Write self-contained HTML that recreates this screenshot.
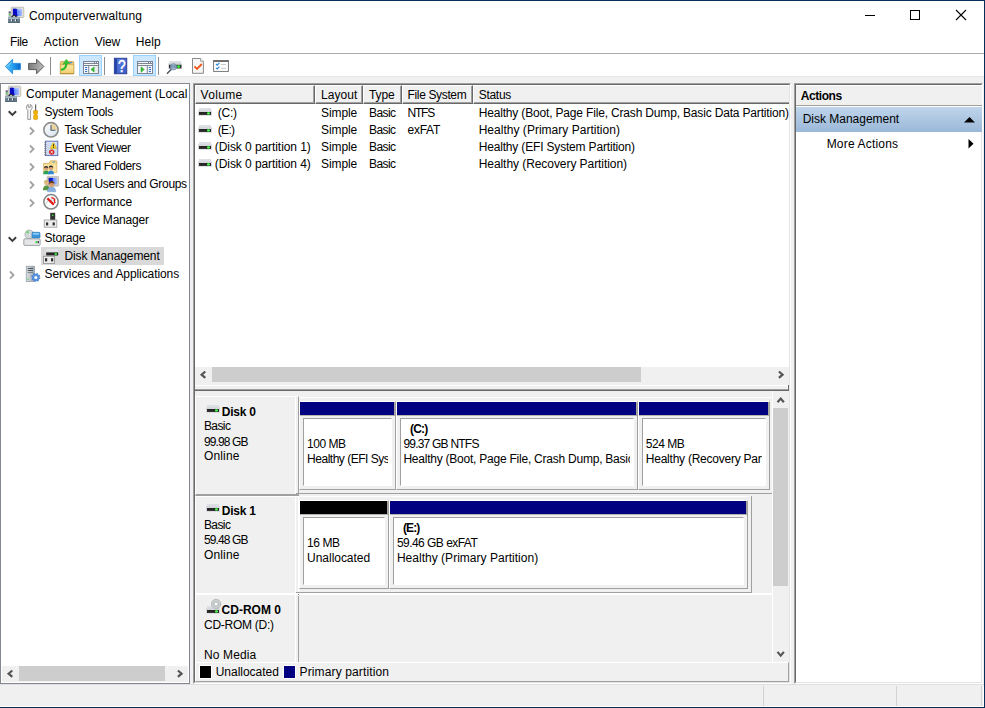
<!DOCTYPE html>
<html>
<head>
<meta charset="utf-8">
<title>Computerverwaltung</title>
<style>
html,body{margin:0;padding:0;}
body{width:985px;height:708px;overflow:hidden;background:#f0f0f0;position:relative;
 font-family:"Liberation Sans",sans-serif;font-size:12px;line-height:16px;color:#000;}
.b{position:absolute;box-sizing:border-box;}
.t{position:absolute;white-space:pre;line-height:16px;height:16px;}
svg{position:absolute;overflow:visible;}
.sunk{border-style:solid;border-width:1px;border-color:#a0a0a0 #fff #fff #a0a0a0;}
.sunk>.in{position:absolute;left:0;top:0;right:0;bottom:0;border-style:solid;border-width:1px;border-color:#696969 #e3e3e3 #e3e3e3 #696969;}
.hd{background:#f0f0f0;border-style:solid;border-width:1px 1px 1px 1px;border-color:#fff #696969 #696969 #fff;height:19px;top:85px;}
.hd:after{content:"";position:absolute;left:0;right:0;bottom:0;top:0;border-style:solid;border-width:0 1px 1px 0;border-color:#a0a0a0;}
.thumb{background:#cdcdcd;}
.lbl{background:#f0f0f0;border-style:solid;border-width:1px;border-color:#fff #a0a0a0 #a0a0a0 #fff;}
.part{background:#f0f0f0;border-style:solid;border-width:1px;border-color:#fff #a0a0a0 #a0a0a0 #fff;}
.part>.bar{position:absolute;left:0;right:1px;top:0;height:13px;box-shadow:1px 0 0 #a6a69c,0 1px 0 #b4b4aa,1px 1px 0 #a6a69c;}
.part>.bx{position:absolute;left:3px;right:3px;top:16px;bottom:3px;background:#fff;border-style:solid;border-width:1px;border-color:#a0a0a0 #fff #fff #a0a0a0;}
</style>
</head>
<body>
<!-- window chrome -->
<div class="b" style="left:0;top:0;width:985px;height:76px;background:#fff;"></div>
<div class="b" style="left:0;top:53px;width:985px;height:1px;background:#ababab;"></div>
<div class="b" style="left:0;top:76px;width:985px;height:1px;background:#e6e6e6;"></div>
<!-- caption buttons -->
<div class="b" style="left:865px;top:15px;width:10px;height:1px;background:#000;"></div>
<div class="b" style="left:910px;top:10px;width:10px;height:10px;border:1px solid #000;"></div>
<svg style="left:956px;top:10px" width="10" height="10" viewBox="0 0 10 10"><path d="M0 0L10 10M10 0L0 10" stroke="#000" stroke-width="1.1" fill="none"/></svg>

<!-- toolbar highlight buttons + separators -->
<div class="b" style="left:79px;top:55px;width:23px;height:21px;background:#cce8ff;border:1px solid #99d1ff;"></div>
<div class="b" style="left:133px;top:55px;width:23px;height:21px;background:#cce8ff;border:1px solid #99d1ff;"></div>
<div class="b" style="left:50px;top:57px;width:1px;height:18px;background:#8d8d8d;"></div>
<div class="b" style="left:104px;top:57px;width:1px;height:18px;background:#8d8d8d;"></div>
<div class="b" style="left:158px;top:57px;width:1px;height:18px;background:#8d8d8d;"></div>

<!-- tree panel -->
<div class="b" style="left:0;top:83px;width:190px;height:601px;background:#fff;border:1px solid #828790;"></div>
<div class="b" style="left:41px;top:247px;width:123px;height:18px;background:#d9d9d9;"></div>
<!-- tree h-scrollbar -->
<div class="b" style="left:2px;top:666px;width:186px;height:16px;background:#f0f0f0;"></div>
<div class="b thumb" style="left:19px;top:666px;width:146px;height:15px;"></div>
<svg style="left:7px;top:670px" width="6" height="8" viewBox="0 0 6 8"><path d="M5.3 0.5L1.6 3.7L5.3 6.9" stroke="#565656" stroke-width="2.2" fill="none"/></svg>
<svg style="left:177px;top:670px" width="6" height="8" viewBox="0 0 6 8"><path d="M0.9 0.5L4.6 3.7L0.9 6.9" stroke="#565656" stroke-width="2.2" fill="none"/></svg>

<!-- centre panel (volume list + graphical view) -->
<div class="b sunk" style="left:193px;top:83px;width:598px;height:601px;background:#f0f0f0;"><div class="in"></div></div>
<!-- volume list -->
<div class="b" style="left:195px;top:85px;width:594px;height:300px;background:#fff;"></div>
<div class="b" style="left:195px;top:85px;width:594px;height:19px;background:#f0f0f0;"></div>
<div class="b hd" style="left:195px;width:120px;"></div>
<div class="b hd" style="left:315px;width:48px;"></div>
<div class="b hd" style="left:363px;width:39px;"></div>
<div class="b hd" style="left:402px;width:71px;"></div>
<div class="b hd" style="left:473px;width:330px;clip-path:inset(0 14px 0 0);"></div>
<!-- volume list h-scrollbar -->
<div class="b" style="left:195px;top:367px;width:594px;height:18px;background:#f0f0f0;"></div>
<div class="b thumb" style="left:212px;top:367px;width:429px;height:15px;"></div>
<svg style="left:200px;top:371px" width="6" height="8" viewBox="0 0 6 8"><path d="M5.3 0.5L1.6 3.7L5.3 6.9" stroke="#565656" stroke-width="2.2" fill="none"/></svg>
<svg style="left:778px;top:371px" width="6" height="8" viewBox="0 0 6 8"><path d="M0.9 0.5L4.6 3.7L0.9 6.9" stroke="#565656" stroke-width="2.2" fill="none"/></svg>
<!-- splitter -->
<div class="b" style="left:195px;top:385px;width:594px;height:6px;background:#f0f0f0;"></div>
<div class="b" style="left:195px;top:385px;width:593px;height:1px;background:#fff;"></div>
<div class="b" style="left:195px;top:389px;width:594px;height:1px;background:#a0a0a0;"></div>
<div class="b" style="left:195px;top:390px;width:594px;height:1px;background:#696969;"></div>
<div class="b" style="left:788px;top:385px;width:1px;height:6px;background:#696969;"></div>
<div class="b" style="left:787px;top:385px;width:1px;height:4px;background:#fff;"></div>

<!-- graphical view -->
<!-- v-scrollbar -->
<div class="b" style="left:772px;top:391px;width:1px;height:271px;background:#fff;"></div>
<div class="b thumb" style="left:773px;top:408px;width:15px;height:178px;"></div>
<svg style="left:777px;top:397px" width="8" height="6" viewBox="0 0 8 6"><path d="M0.5 5.3L3.7 1.6L6.9 5.3" stroke="#565656" stroke-width="2.2" fill="none"/></svg>
<svg style="left:777px;top:651px" width="8" height="6" viewBox="0 0 8 6"><path d="M0.5 0.9L3.7 4.6L6.9 0.9" stroke="#565656" stroke-width="2.2" fill="none"/></svg>

<!-- disk 0 -->
<div class="b lbl" style="left:195px;top:396px;width:104px;height:100px;border-bottom-width:2px;"></div>
<div class="b" style="left:299px;top:397px;width:473px;height:1px;background:#fff;"></div>
<div class="b" style="left:296px;top:493px;width:476px;height:1px;background:#a0a0a0;"></div>
<div class="b part" style="left:299px;top:401px;width:97px;height:89px;"><div class="bar" style="background:#000080"></div><div class="bx"></div></div>
<div class="b part" style="left:396px;top:401px;width:242px;height:89px;"><div class="bar" style="background:#000080"></div><div class="bx"></div></div>
<div class="b part" style="left:638px;top:401px;width:132px;height:89px;"><div class="bar" style="background:#000080"></div><div class="bx"></div></div>

<!-- disk 1 -->
<div class="b lbl" style="left:195px;top:496px;width:104px;height:99px;border-color:#fff;"></div>
<div class="b" style="left:299px;top:496px;width:453px;height:1px;background:#fff;"></div>
<div class="b" style="left:296px;top:592px;width:456px;height:1px;background:#a0a0a0;"></div>
<div class="b" style="left:751px;top:496px;width:1px;height:97px;background:#a0a0a0;"></div>
<div class="b part" style="left:299px;top:500px;width:90px;height:89px;"><div class="bar" style="background:#000"></div><div class="bx"></div></div>
<div class="b part" style="left:389px;top:500px;width:359px;height:89px;"><div class="bar" style="background:#000080"></div><div class="bx"></div></div>

<!-- cd-rom 0 -->
<div class="b" style="left:195px;top:593px;width:577px;height:2px;background:#fff;"></div>
<div class="b" style="left:195px;top:594px;width:1px;height:68px;background:#fff;"></div>
<div class="b" style="left:298px;top:596px;width:1px;height:66px;background:#a0a0a0;"></div>
<div class="b" style="left:298px;top:594px;width:1px;height:1px;background:#808080;"></div>
<!-- inner white vertical line through all label boxes -->
<div class="b" style="left:295px;top:397px;width:1px;height:97px;background:#fff;"></div>
<div class="b" style="left:295px;top:496px;width:1px;height:97px;background:#fff;"></div>
<div class="b" style="left:295px;top:595px;width:1px;height:67px;background:#fff;"></div>

<!-- legend -->
<div class="b" style="left:195px;top:662px;width:594px;height:20px;background:#f0f0f0;border-style:solid;border-width:1px;border-color:#fff #a0a0a0 #a0a0a0 #fff;"></div>
<div class="b" style="left:199px;top:665px;width:13px;height:14px;background:#000;border:1px solid #fff;"></div>
<div class="b" style="left:283px;top:665px;width:13px;height:14px;background:#000080;border:1px solid #fff;"></div>

<!-- actions pane -->
<div class="b sunk" style="left:794px;top:83px;width:189px;height:601px;background:#fff;"><div class="in"></div></div>
<div class="b" style="left:796px;top:85px;width:186px;height:20px;background:#f0f0f0;border-top:1px solid #fff;"></div>
<div class="b" style="left:796px;top:105px;width:186px;height:1px;background:#a0a0a0;"></div>
<div class="b" style="left:796px;top:107px;width:186px;height:25px;background:linear-gradient(#bfd5eb,#9bb8d8);"></div>
<svg style="left:964px;top:117px" width="11" height="6" viewBox="0 0 11 6"><path d="M0 5.5L5.5 0L11 5.5Z" fill="#000"/></svg>
<svg style="left:968px;top:139px" width="6" height="10" viewBox="0 0 6 10"><path d="M0.5 0L5.5 4.7L0.5 9.4Z" fill="#000"/></svg>

<!-- status bar -->
<div class="b" style="left:0;top:706px;width:984px;height:1px;background:#fff;"></div>
<div class="b" style="left:983px;top:686px;width:1px;height:21px;background:#fff;"></div>
<div class="b" style="left:0;top:684px;width:985px;height:1px;background:#dfdfdf;"></div>
<div class="b" style="left:763px;top:686px;width:1px;height:20px;background:#d2d2d2;"></div>
<div class="b" style="left:896px;top:686px;width:1px;height:20px;background:#d2d2d2;"></div>
<div class="b" style="left:981px;top:686px;width:1px;height:20px;background:#d2d2d2;"></div>

<!-- icons -->
<svg style="left:0;top:0" width="985" height="708" viewBox="0 0 985 708">
<defs>
<linearGradient id="gBack" x1="0" y1="0" x2="1" y2="0"><stop offset="0" stop-color="#62c8fb"/><stop offset="0.55" stop-color="#1e9bee"/><stop offset="1" stop-color="#0a64c8"/></linearGradient>
<linearGradient id="gFwd" x1="0" y1="0" x2="1" y2="0"><stop offset="0" stop-color="#7a7a7a"/><stop offset="1" stop-color="#bdbdbd"/></linearGradient>
<linearGradient id="gScr" x1="0" y1="0" x2="1" y2="0"><stop offset="0" stop-color="#0008b8"/><stop offset="0.45" stop-color="#1030e0"/><stop offset="0.5" stop-color="#6088ff"/><stop offset="1" stop-color="#a8c0ff"/></linearGradient>
<linearGradient id="gFold" x1="0" y1="0" x2="0" y2="1"><stop offset="0" stop-color="#fbe9a8"/><stop offset="1" stop-color="#f0cc70"/></linearGradient>
<linearGradient id="gHelp" x1="0" y1="0" x2="1" y2="1"><stop offset="0" stop-color="#5a7ee0"/><stop offset="1" stop-color="#3c5cc8"/></linearGradient>
<linearGradient id="gClock" x1="0" y1="0" x2="1" y2="1"><stop offset="0" stop-color="#ffffff"/><stop offset="1" stop-color="#d4e0ee"/></linearGradient>
<linearGradient id="gTower" x1="0" y1="0" x2="1" y2="0"><stop offset="0" stop-color="#e0e4e8"/><stop offset="1" stop-color="#9aa4ae"/></linearGradient>
<!-- small drive icon 14x8, origin top-left -->
<g id="drv">
 <rect x="1" y="0" width="12" height="3" fill="#dcdfe3"/>
 <rect x="0" y="2.3" width="14" height="5.5" rx="0.6" fill="#d3d6db"/>
 <rect x="1" y="4" width="12" height="2.9" fill="#262626"/>
 <circle cx="10.5" cy="5.45" r="1.35" fill="#36e636"/>
 <rect x="9.1" y="5.1" width="2.8" height="0.7" fill="#5aff5a"/>
</g>
<!-- window icon frame 16x13 -->
<g id="win">
 <rect x="0" y="0" width="16" height="13" fill="#7b8595"/>
 <rect x="1" y="1" width="10" height="1" fill="#f4f6f8"/>
 <rect x="12" y="1" width="1" height="1" fill="#f4f6f8"/><rect x="14" y="1" width="1" height="1" fill="#f4f6f8"/>
 <rect x="1" y="3" width="14" height="1" fill="#f4f6f8"/>
</g>
<path id="chevR" d="M0.8 0.7L4.3 4.3L0.8 7.9" stroke="#a3a3a3" stroke-width="1.9" fill="none"/>
<path id="chevD" d="M0.7 0.8L4.4 4.4L8.1 0.8" stroke="#3a3a3a" stroke-width="1.9" fill="none"/>
<!-- person: head + shoulders; origin = top of head centre -->
</defs>

<!-- ============ title icon + tree root icon (same artwork) ============ -->
<g id="cm" transform="translate(8,7)">
 <rect x="3.3" y="0.2" width="12.5" height="10.3" rx="0.8" fill="#e7e4da" stroke="#aeaca2" stroke-width="0.7"/>
 <rect x="4.9" y="1.8" width="9.2" height="7.4" fill="url(#gScr)"/>
 <path d="M4.9 1.8H8L9.6 9.2H4.9Z" fill="#0a0ac4"/>
 <rect x="9.4" y="2.2" width="4.4" height="1.2" fill="#c8d6ff" opacity="0.7"/>
 <rect x="0.5" y="4.2" width="2.5" height="6.4" fill="#b4b4b8"/>
 <rect x="0.9" y="4.6" width="1.7" height="1.6" fill="#565668"/>
 <rect x="0.9" y="6.9" width="1.7" height="1.3" fill="#44e444"/>
 <path d="M3.6 10.4Q6 6.4 8.6 10.4" stroke="#262c32" stroke-width="1.4" fill="#f4f4f4"/>
 <rect x="0.1" y="10.3" width="11.9" height="5.7" rx="0.5" fill="#687e8c"/>
 <rect x="0.1" y="10.3" width="11.9" height="1.5" fill="#9bafba"/>
 <rect x="0.8" y="10.9" width="10.4" height="0.5" fill="#dfe8ec" opacity="0.8"/>
 <rect x="3" y="12.4" width="1.2" height="2" fill="#eef2f4"/><rect x="4.2" y="12.4" width="0.9" height="2" fill="#2e363c"/>
 <rect x="7" y="12.4" width="1.2" height="2" fill="#eef2f4"/><rect x="8.2" y="12.4" width="0.9" height="2" fill="#2e363c"/>
 <rect x="0.1" y="14.8" width="11.9" height="1.2" fill="#566976"/>
</g>
<use href="#cm" transform="translate(-3,79)"/>

<!-- ============ toolbar ============ -->
<path d="M5.4 66.5L12.6 59.2V63.4H20.4V69.6H12.6V73.8Z" fill="url(#gBack)" stroke="#2f8fdc" stroke-width="1" stroke-linejoin="round"/>
<path d="M7.2 66.5L12 61.7" stroke="#9be0ff" stroke-width="0.9" fill="none" opacity="0.8"/>
<path d="M43.8 66.5L36.6 59.2V63.4H28.6V69.6H36.6V73.8Z" fill="url(#gFwd)" stroke="#5a5a5a" stroke-width="1" stroke-linejoin="round"/>
<!-- folder up -->
<path d="M60.3 62.6Q60.3 61.4 61.5 61.4H72.6Q73.8 61.4 73.8 62.6V73.8H60.3Z" fill="#e9c76e" stroke="#c39b3e" stroke-width="0.7"/>
<rect x="69.2" y="62" width="3" height="1.3" rx="0.6" fill="#3f8fe8"/>
<rect x="60.3" y="64.8" width="13.5" height="9" fill="url(#gFold)" stroke="#c9a447" stroke-width="0.7"/>
<rect x="60.3" y="73.2" width="13.5" height="0.8" fill="#b48c34"/>
<path d="M62 69.6Q66.4 68.4 66.2 63.6" stroke="#2aba2a" stroke-width="2.2" fill="none" stroke-linecap="round"/>
<path d="M62.9 64.4L66.2 59.2L69.8 63.6Q67.8 63.2 66.3 63.9Q64.6 63.4 62.9 64.4Z" fill="#35c935" stroke="#1f9a1f" stroke-width="0.4"/>
<!-- console tree toggle -->
<use href="#win" x="83" y="61"/>
<rect x="84" y="66" width="4.2" height="7" fill="#fbfcfd"/>
<rect x="89.2" y="66" width="8.8" height="7" fill="#fbfcfd"/>
<rect x="95.2" y="66" width="2.8" height="7" fill="#ececec"/>
<rect x="85" y="67" width="2.2" height="1.1" fill="#3a79c9"/><rect x="85" y="69" width="2.2" height="1.1" fill="#3a79c9"/><rect x="85" y="71" width="2.2" height="1.1" fill="#3a79c9"/>
<path d="M90.9 69.5L94.2 66.8V72.2Z" fill="#38b838" stroke="#2aa42a" stroke-width="0.5"/>
<!-- help -->
<rect x="114.3" y="58.2" width="12.5" height="15.6" fill="url(#gHelp)" stroke="#1c2f86" stroke-width="0.8"/>
<rect x="114.6" y="58.6" width="2.5" height="14.8" fill="#2744a8"/>
<text x="121.9" y="71.6" font-family="Liberation Sans, sans-serif" font-size="16" fill="#fff" stroke="#fff" stroke-width="0.5" text-anchor="middle" transform="translate(121.9 0) scale(0.85 1) translate(-121.9 0)">?</text>
<!-- action pane toggle -->
<use href="#win" x="137" y="61"/>
<rect x="138" y="66" width="8.8" height="7" fill="#f6f6f6"/>
<rect x="147.8" y="66" width="4.2" height="7" fill="#fbfcfd"/>
<rect x="148.8" y="67" width="2.2" height="1.1" fill="#3a79c9"/><rect x="148.8" y="69" width="2.2" height="1.1" fill="#3a79c9"/><rect x="148.8" y="71" width="2.2" height="1.1" fill="#3a79c9"/>
<path d="M144.3 69.5L141 66.8V72.2Z" fill="#38b838" stroke="#2aa42a" stroke-width="0.5"/>
<!-- disk + magnifier -->
<rect x="169.2" y="61.1" width="11.8" height="3.8" fill="#d9dcdf"/>
<rect x="168.3" y="63.4" width="13.6" height="5.6" fill="#cfd2d6"/>
<rect x="169" y="64.8" width="12.4" height="3.5" fill="#2a2a2a"/>
<circle cx="178.6" cy="66.5" r="1.5" fill="#34e634"/>
<path d="M171.4 69.2L167.4 73.2" stroke="#4e5964" stroke-width="1.5" stroke-linecap="round"/>
<circle cx="173.5" cy="66.8" r="3.1" fill="#a8c8e8" fill-opacity="0.72" stroke="#6c8aa6" stroke-width="0.9"/>
<!-- doc + check -->
<path d="M192.5 58.5H200.6L203.4 61.3V73.3H192.5Z" fill="#f7f7f7" stroke="#7d7d7d" stroke-width="0.9"/>
<path d="M200.6 58.5V61.3H203.4" fill="#fff" stroke="#7d7d7d" stroke-width="0.7"/>
<path d="M194.4 66.4L197 68.9L201.8 64" stroke="#f0581a" stroke-width="1.8" fill="none"/>
<!-- checklist -->
<rect x="213.6" y="60.6" width="14.8" height="10.8" fill="#fdfdfd" stroke="#6d6d6d" stroke-width="0.9"/>
<rect x="213.2" y="60.2" width="15.6" height="1.8" fill="#6d6d6d"/>
<path d="M216 64L217.2 65.2L219.4 62.9M216 67.8L217.2 69L219.4 66.7" stroke="#2788e2" stroke-width="1.2" fill="none"/>
<rect x="221" y="64.1" width="5" height="0.9" fill="#c4c4c4"/><rect x="221" y="67.9" width="5" height="0.9" fill="#c4c4c4"/>

<!-- ============ tree chevrons ============ -->
<use href="#chevD" x="8" y="110.5"/>
<use href="#chevD" x="8" y="236.5"/>
<use href="#chevR" x="29.2" y="126.8"/>
<use href="#chevR" x="29.2" y="144.8"/>
<use href="#chevR" x="29.2" y="162.8"/>
<use href="#chevR" x="29.2" y="180.8"/>
<use href="#chevR" x="29.2" y="198.8"/>
<use href="#chevR" x="9.2" y="270.8"/>

<!-- ============ tree icons ============ -->
<!-- System Tools: wrench + screwdriver -->
<path d="M27.8 119.4V110.2Q25.8 108.8 26.4 106.4Q26.9 104.9 28.2 104.4V107.2H30.2V104.4Q31.6 104.9 32.1 106.4Q32.6 108.8 30.6 110.2V119.4Z" fill="#f4f4f4" stroke="#8c8c8c" stroke-width="0.9" stroke-linejoin="round"/>
<rect x="35.1" y="104.4" width="1.1" height="7" fill="#585858"/>
<path d="M33.6 110.6H37.6V113.6L36.6 114.4L37.6 115.2V118.6Q37.6 119.6 36.6 119.6H34.6Q33.6 119.6 33.6 118.6V115.2L34.6 114.4L33.6 113.6Z" fill="#f2b200" stroke="#c88a00" stroke-width="0.5"/>
<!-- Task Scheduler: clock -->
<circle cx="51" cy="129.8" r="7.2" fill="url(#gClock)" stroke="#8c8c8c" stroke-width="1.6"/>
<path d="M51 129.8V123.6A6.2 6.2 0 0 1 57.2 129.8Z" fill="#ead39a"/>
<path d="M51 125V130.2H55.4" stroke="#4a5a6e" stroke-width="1.1" fill="none"/>
<!-- Event Viewer -->
<rect x="45.4" y="141.2" width="12.4" height="14.4" fill="#e2eafa" stroke="#5068b2" stroke-width="0.9"/>
<path d="M46.5 144H57M46.5 146H57M46.5 148H57M46.5 150H57M46.5 152H57M46.5 154H57" stroke="#a9b9e2" stroke-width="0.7"/>
<path d="M44.4 142.6h2M44.4 144.6h2M44.4 146.6h2M44.4 148.6h2M44.4 150.6h2M44.4 152.6h2M44.4 154.6h2" stroke="#787878" stroke-width="1"/>
<path d="M53.4 142.4L56.7 148.4H50.1Z" fill="#f8d31e" stroke="#c8a000" stroke-width="0.5" stroke-linejoin="round"/>
<rect x="53" y="144.2" width="0.9" height="2.3" fill="#202020"/><rect x="53" y="147" width="0.9" height="0.8" fill="#202020"/>
<circle cx="51.7" cy="152.1" r="2.7" fill="#d92222"/>
<path d="M50.6 151L52.8 153.2M52.8 151L50.6 153.2" stroke="#fff" stroke-width="0.9"/>
<!-- Shared Folders -->
<path d="M43.6 163.4H49L50.4 160.8H56.2Q56.8 160.8 56.8 161.4V172.6H43.6Z" fill="#f5d98b" stroke="#cfa84a" stroke-width="0.7"/>
<rect x="52.4" y="161.4" width="2.8" height="1.1" rx="0.5" fill="#4a92e6"/>
<rect x="44" y="164.6" width="12.4" height="7.8" fill="#f9e4a4"/>
<path d="M43.2 174.2Q43.2 170.6 46.2 170.6Q49.2 170.6 49.2 174.2Z" fill="#2fa052"/>
<path d="M48 174.2Q48 170.4 51 170.4Q54 170.4 54 174.2Z" fill="#2f8ad2"/>
<circle cx="46.2" cy="168.4" r="2.1" fill="#d8a274"/><path d="M44 168.2A2.2 2.2 0 0 1 48.4 168.2Q46.2 166.8 44 168.2Z" fill="#2c2c2c"/>
<circle cx="51" cy="168" r="2.2" fill="#d8a274"/><path d="M48.7 167.8A2.3 2.3 0 0 1 53.3 167.8Q51 166.4 48.7 167.8Z" fill="#2c2c2c"/>
<!-- Local Users and Groups -->
<rect x="47" y="176.4" width="11.6" height="9.8" rx="0.6" fill="#d4d0c4" stroke="#a8a498" stroke-width="0.6"/>
<rect x="48.6" y="177.8" width="8.6" height="6.8" fill="url(#gScr)"/>
<path d="M43 190.2Q43 185.6 46.4 185.6Q49.8 185.6 49.8 190.2Z" fill="#559440"/>
<circle cx="46.4" cy="182.8" r="2.4" fill="#e2b888"/><path d="M43.9 182.4A2.5 2.5 0 0 1 48.9 182.4Q46.4 180.8 43.9 182.4Z" fill="#c9b06a"/>
<path d="M47.4 191.8Q47.4 187 51.6 187Q55.8 187 55.8 191.8Z" fill="#86aede" stroke="#6890c4" stroke-width="0.4"/>
<circle cx="51.6" cy="184.2" r="2.6" fill="#d49a6a"/><path d="M48.9 183.8A2.7 2.7 0 0 1 54.3 183.8Q51.6 182 48.9 183.8Z" fill="#6e3e1c"/>
<!-- Performance -->
<circle cx="51" cy="201.8" r="7.2" fill="#fdfdfd" stroke="#858585" stroke-width="1.5"/>
<path d="M46.2 203.6A5 5 0 0 1 55.8 203.6" stroke="#5aa0a0" stroke-width="0.9" fill="none" stroke-dasharray="1 1.2"/>
<path d="M47.4 198.4L53.8 204.6" stroke="#de1a1a" stroke-width="2.2"/>
<path d="M51.4 197.4L54.6 199.2V203.2" stroke="#de1a1a" stroke-width="1.3" fill="none"/>
<!-- Device Manager -->
<rect x="50.2" y="212.8" width="5" height="7.4" fill="#343434"/>
<rect x="52" y="214.6" width="1.4" height="1.4" fill="#3ce43c"/>
<rect x="44.2" y="220" width="12.6" height="7.2" fill="#ededed" stroke="#9c9c9c" stroke-width="0.8"/>
<rect x="46" y="222.4" width="2.2" height="3" fill="#2e2e2e"/><rect x="52.6" y="222.4" width="2.2" height="3" fill="#2e2e2e"/>
<!-- Storage -->
<circle cx="29.3" cy="234.4" r="4.4" fill="#d4d8da" stroke="#9aa0a4" stroke-width="0.7"/>
<path d="M29.3 234.4L25.6 232.2A4.3 4.3 0 0 1 28 230.2Z" fill="#74d474"/>
<circle cx="29.3" cy="234.4" r="1.2" fill="#fff" stroke="#9aa0a4" stroke-width="0.4"/>
<rect x="32" y="232.3" width="8" height="5.8" rx="1" fill="#3a96dc" stroke="#2270b4" stroke-width="0.6"/>
<rect x="32.8" y="233" width="6.4" height="1.8" rx="0.6" fill="#8cc8f4"/>
<rect x="23.8" y="238.8" width="16.4" height="6.6" rx="1.2" fill="#e4e6e8" stroke="#8c9094" stroke-width="0.8"/>
<rect x="35.6" y="241" width="1.6" height="2.2" fill="#38dc38"/><rect x="37.6" y="241" width="1.4" height="2.2" fill="#404040"/>
<!-- Disk Management -->
<rect x="46.4" y="249.2" width="11.4" height="3.4" fill="#e4e6ea"/>
<rect x="45.6" y="251.2" width="13" height="4.8" fill="#dcdfe3"/>
<rect x="46.2" y="252.4" width="12" height="3.1" fill="#262626"/>
<circle cx="55.8" cy="254" r="1.2" fill="#38e238"/>
<rect x="43.4" y="256.2" width="11.2" height="7.2" fill="#ececec" stroke="#8e8e8e" stroke-width="0.8"/>
<rect x="45" y="258.2" width="2.2" height="3.2" fill="#2e2e2e"/><rect x="51" y="258.2" width="2.2" height="3.2" fill="#2e2e2e"/>
<!-- Services and Applications -->
<rect x="26.2" y="266.2" width="8.2" height="15.2" fill="url(#gTower)" stroke="#8a949e" stroke-width="0.7"/>
<rect x="27.6" y="268" width="5.4" height="1" fill="#4c565e"/><rect x="27.6" y="270" width="5.4" height="1" fill="#4c565e"/><rect x="27.6" y="272" width="5.4" height="1" fill="#7c868e"/>
<rect x="27.4" y="278.6" width="1.2" height="1.2" fill="#3cd43c"/>
<circle cx="35.8" cy="277.4" r="3.6" fill="#4a86d4" stroke="#4a86d4" stroke-width="1.8" stroke-dasharray="1.5 1.33"/>
<circle cx="35.8" cy="277.4" r="3.1" fill="#5a94de"/>
<circle cx="35.8" cy="277.4" r="1.5" fill="#f4f8fc"/>

<!-- ============ volume list drive icons ============ -->
<use href="#drv" x="198" y="108"/>
<use href="#drv" x="198" y="125"/>
<use href="#drv" x="198" y="142"/>
<use href="#drv" x="198" y="159"/>
<!-- disk label icons -->
<use href="#drv" x="206" y="405"/>
<use href="#drv" x="206" y="504"/>
<!-- cd-rom icon -->
<use href="#drv" x="206" y="606"/>
<circle cx="216.1" cy="604" r="4.7" fill="#ccd0d0" stroke="#a8acac" stroke-width="0.7"/>
<circle cx="216.1" cy="604" r="2.5" fill="none" stroke="#b4b8b8" stroke-width="0.6"/>
<circle cx="216.1" cy="604" r="1.2" fill="#fff"/>
</svg>


<!-- text -->
<span class="t" style="left:29.00px;top:8.00px;letter-spacing:0.128px;">Computerverwaltung</span>
<span class="t" style="left:10.00px;top:34.00px;letter-spacing:-0.381px;">File</span>
<span class="t" style="left:43.70px;top:34.00px;letter-spacing:0.308px;">Action</span>
<span class="t" style="left:94.80px;top:34.00px;letter-spacing:-0.132px;">View</span>
<span class="t" style="left:135.80px;top:34.00px;letter-spacing:0.104px;">Help</span>
<span class="t" style="left:26.10px;top:86.00px;letter-spacing:-0.032px;width:161.90px;overflow:hidden;">Computer Management (Local</span>
<span class="t" style="left:44.50px;top:104.00px;letter-spacing:-0.213px;">System Tools</span>
<span class="t" style="left:64.40px;top:122.00px;letter-spacing:-0.388px;">Task Scheduler</span>
<span class="t" style="left:64.40px;top:140.00px;letter-spacing:-0.344px;">Event Viewer</span>
<span class="t" style="left:64.40px;top:158.00px;letter-spacing:-0.388px;">Shared Folders</span>
<span class="t" style="left:64.40px;top:176.00px;letter-spacing:-0.319px;">Local Users and Groups</span>
<span class="t" style="left:64.40px;top:194.00px;letter-spacing:-0.100px;">Performance</span>
<span class="t" style="left:64.40px;top:212.00px;letter-spacing:-0.221px;">Device Manager</span>
<span class="t" style="left:44.50px;top:230.00px;letter-spacing:-0.189px;">Storage</span>
<span class="t" style="left:64.40px;top:248.00px;letter-spacing:-0.094px;">Disk Management</span>
<span class="t" style="left:44.50px;top:266.00px;letter-spacing:-0.085px;">Services and Applications</span>
<span class="t" style="left:200.60px;top:87.00px;letter-spacing:0.314px;">Volume</span>
<span class="t" style="left:321.00px;top:87.00px;letter-spacing:0.054px;">Layout</span>
<span class="t" style="left:369.00px;top:87.00px;letter-spacing:-0.139px;">Type</span>
<span class="t" style="left:407.60px;top:87.00px;letter-spacing:-0.359px;">File System</span>
<span class="t" style="left:478.70px;top:87.00px;letter-spacing:-0.286px;">Status</span>
<span class="t" style="left:217.80px;top:105.00px;letter-spacing:-0.233px;">(C:)</span>
<span class="t" style="left:321.00px;top:105.00px;letter-spacing:-0.078px;">Simple</span>
<span class="t" style="left:369.00px;top:105.00px;letter-spacing:-0.586px;">Basic</span>
<span class="t" style="left:407.60px;top:105.00px;letter-spacing:-1.248px;">NTFS</span>
<span class="t" style="left:478.70px;top:105.00px;letter-spacing:-0.170px;width:310.30px;overflow:hidden;">Healthy (Boot, Page File, Crash Dump, Basic Data Partition)</span>
<span class="t" style="left:217.80px;top:122.00px;letter-spacing:-0.681px;">(E:)</span>
<span class="t" style="left:321.00px;top:122.00px;letter-spacing:-0.078px;">Simple</span>
<span class="t" style="left:369.00px;top:122.00px;letter-spacing:-0.586px;">Basic</span>
<span class="t" style="left:407.60px;top:122.00px;letter-spacing:-0.274px;">exFAT</span>
<span class="t" style="left:478.70px;top:122.00px;letter-spacing:0.019px;width:310.30px;overflow:hidden;">Healthy (Primary Partition)</span>
<span class="t" style="left:214.80px;top:139.00px;letter-spacing:-0.072px;">(Disk 0 partition 1)</span>
<span class="t" style="left:321.00px;top:139.00px;letter-spacing:-0.078px;">Simple</span>
<span class="t" style="left:369.00px;top:139.00px;letter-spacing:-0.586px;">Basic</span>
<span class="t" style="left:478.70px;top:139.00px;letter-spacing:-0.172px;width:310.30px;overflow:hidden;">Healthy (EFI System Partition)</span>
<span class="t" style="left:214.80px;top:156.00px;letter-spacing:-0.072px;">(Disk 0 partition 4)</span>
<span class="t" style="left:321.00px;top:156.00px;letter-spacing:-0.078px;">Simple</span>
<span class="t" style="left:369.00px;top:156.00px;letter-spacing:-0.586px;">Basic</span>
<span class="t" style="left:478.70px;top:156.00px;letter-spacing:-0.062px;width:310.30px;overflow:hidden;">Healthy (Recovery Partition)</span>
<span class="t" style="left:800.70px;top:88.00px;letter-spacing:-0.419px;font-weight:bold;">Actions</span>
<span class="t" style="left:802.70px;top:111.00px;letter-spacing:-0.016px;">Disk Management</span>
<span class="t" style="left:826.70px;top:136.00px;letter-spacing:0.175px;">More Actions</span>
<span class="t" style="left:221.80px;top:404.00px;letter-spacing:-0.252px;font-weight:bold;">Disk 0</span>
<span class="t" style="left:203.90px;top:418.00px;letter-spacing:-0.586px;">Basic</span>
<span class="t" style="left:203.90px;top:434.00px;letter-spacing:-0.858px;">99.98 GB</span>
<span class="t" style="left:203.90px;top:448.00px;letter-spacing:0.163px;">Online</span>
<span class="t" style="left:221.80px;top:503.00px;letter-spacing:-0.252px;font-weight:bold;">Disk 1</span>
<span class="t" style="left:203.90px;top:517.00px;letter-spacing:-0.586px;">Basic</span>
<span class="t" style="left:203.90px;top:532.00px;letter-spacing:-0.858px;">59.48 GB</span>
<span class="t" style="left:203.90px;top:547.00px;letter-spacing:0.163px;">Online</span>
<span class="t" style="left:307.10px;top:436.00px;letter-spacing:-0.512px;">100 MB</span>
<span class="t" style="left:307.10px;top:451.00px;letter-spacing:-0.488px;width:81.30px;overflow:hidden;">Healthy (EFI System Partition)</span>
<span class="t" style="left:410.00px;top:421.00px;letter-spacing:-0.819px;font-weight:bold;">(C:)</span>
<span class="t" style="left:403.40px;top:436.00px;letter-spacing:-0.781px;">99.37 GB NTFS</span>
<span class="t" style="left:403.40px;top:451.00px;letter-spacing:-0.232px;width:226.20px;overflow:hidden;">Healthy (Boot, Page File, Crash Dump, Basic Data Partition)</span>
<span class="t" style="left:645.80px;top:436.00px;letter-spacing:-0.492px;">524 MB</span>
<span class="t" style="left:645.80px;top:451.00px;letter-spacing:-0.236px;width:116.10px;overflow:hidden;">Healthy (Recovery Partition)</span>
<span class="t" style="left:307.10px;top:535.00px;letter-spacing:-0.422px;">16 MB</span>
<span class="t" style="left:307.10px;top:550.00px;letter-spacing:-0.037px;">Unallocated</span>
<span class="t" style="left:402.90px;top:520.00px;letter-spacing:-0.867px;font-weight:bold;">(E:)</span>
<span class="t" style="left:396.90px;top:535.00px;letter-spacing:-0.533px;">59.46 GB exFAT</span>
<span class="t" style="left:396.90px;top:550.00px;letter-spacing:0.023px;">Healthy (Primary Partition)</span>
<span class="t" style="left:221.60px;top:602.00px;letter-spacing:0.008px;font-weight:bold;">CD-ROM 0</span>
<span class="t" style="left:204.00px;top:617.00px;letter-spacing:-0.266px;">CD-ROM (D:)</span>
<span class="t" style="left:204.00px;top:647.00px;letter-spacing:0.120px;">No Media</span>
<span class="t" style="left:215.70px;top:664.00px;letter-spacing:-0.018px;">Unallocated</span>
<span class="t" style="left:299.50px;top:664.00px;letter-spacing:0.134px;">Primary partition</span>

<!-- window border -->
<div class="b" style="left:0;top:0;width:985px;height:1px;background:#052f58;"></div>
<div class="b" style="left:984px;top:0;width:1px;height:708px;background:#052f58;"></div>
<div class="b" style="left:0;top:707px;width:985px;height:1px;background:#052f58;"></div>
</body>
</html>
